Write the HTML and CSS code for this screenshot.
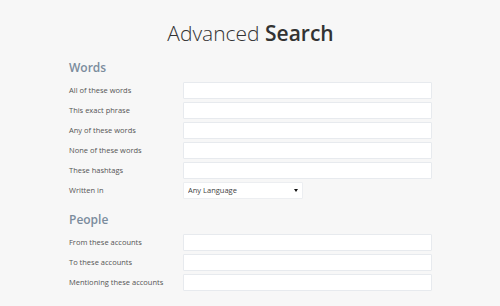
FILE: index.html
```html
<!DOCTYPE html>
<html lang="en">
<head>
  <meta charset="UTF-8" />
  <title>Advanced Search</title>
  <link rel="stylesheet" href="styles.css">
</head>
<body>
  <div class="page">
    <h1 class="title"><span class="light">Advanced</span> <strong>Search</strong></h1>

    <div class="group">
      <h2>Words</h2>
      <div class="row"><label>All of these words</label><input type="text" class="box"></div>
      <div class="row"><label>This exact phrase</label><input type="text" class="box"></div>
      <div class="row"><label>Any of these words</label><input type="text" class="box"></div>
      <div class="row"><label>None of these words</label><input type="text" class="box"></div>
      <div class="row"><label>These hashtags</label><input type="text" class="box"></div>
      <div class="row">
        <label>Written in</label>
        <div class="select-wrap">
          <select class="select">
            <option>Any Language</option>
          </select>
        </div>
      </div>
    </div>

    <div class="group">
      <h2>People</h2>
      <div class="row"><label>From these accounts</label><input type="text" class="box"></div>
      <div class="row"><label>To these accounts</label><input type="text" class="box"></div>
      <div class="row"><label>Mentioning these accounts</label><input type="text" class="box"></div>
    </div>
  </div>
</body>
</html>
```

FILE: styles.css
```css
body {
  margin: 0;
  background-color: #f7f7f7;
  font-family: "Open Sans", Arial, sans-serif;
  color: #444;
}

.page {
  padding: 0 68px 0 69px;
}

.title {
  margin: 18px 0 12px;
  text-align: center;
  font-size: 21px;
  line-height: 30px;
  font-weight: 400;
  color: #333;
}

.title .light {
  font-weight: 300;
}

.title strong {
  font-weight: 600;
}

.group {
  margin-bottom: 12px;
}

.group h2 {
  margin: 0 0 4px;
  font-size: 12px;
  line-height: 16px;
  font-weight: 600;
  color: #7b8c9d;
}

.row {
  display: grid;
  grid-template-columns: 114px 249px;
  align-items: center;
  height: 20px;
}

.row label {
  font-size: 7.5px;
  color: #555;
}

.box {
  display: block;
  box-sizing: border-box;
  width: 249px;
  height: 17px;
  margin: 0;
  border: 1px solid #e7eaee;
  border-radius: 1px;
  background-color: #fff;
}

.select-wrap {
  position: relative;
  width: 120px;
  height: 17px;
}

.select {
  display: block;
  appearance: none;
  -webkit-appearance: none;
  box-sizing: border-box;
  width: 120px;
  height: 17px;
  margin: 0;
  padding: 0 4px;
  border: 1px solid #eceef1;
  border-radius: 1px;
  background-color: #fff;
  font-family: "Open Sans", Arial, sans-serif;
  font-size: 7.5px;
  color: #444;
}

.select-wrap::after {
  content: "";
  position: absolute;
  right: 5px;
  top: 7px;
  border-left: 2px solid transparent;
  border-right: 2px solid transparent;
  border-top: 3px solid #111;
  pointer-events: none;
}
```
